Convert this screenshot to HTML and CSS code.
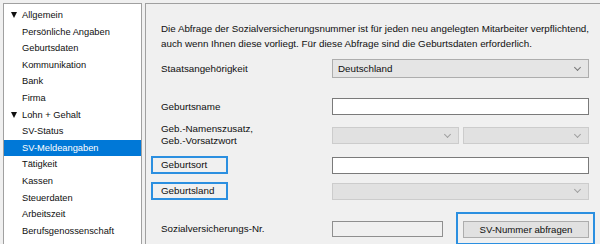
FILE: index.html
```html
<!DOCTYPE html>
<html lang="de">
<head>
    <meta charset="UTF-8">
    <title>SV-Meldeangaben</title>
    <link rel="stylesheet" href="styles.css">
</head>
<body>
    <div class="window">
        <!-- Navigation tree -->
        <ul class="tree">
            <li class="group">Allgemein</li>
            <li>Persönliche Angaben</li>
            <li>Geburtsdaten</li>
            <li>Kommunikation</li>
            <li>Bank</li>
            <li>Firma</li>
            <li class="group">Lohn + Gehalt</li>
            <li>SV-Status</li>
            <li class="selected">SV-Meldeangaben</li>
            <li>Tätigkeit</li>
            <li>Kassen</li>
            <li>Steuerdaten</li>
            <li>Arbeitszeit</li>
            <li>Berufsgenossenschaft</li>
        </ul>

        <!-- Form panel -->
        <div class="panel">
            <p class="intro">Die Abfrage der Sozialversicherungsnummer ist für jeden neu angelegten Mitarbeiter verpflichtend,<br>auch wenn Ihnen diese vorliegt. Für diese Abfrage sind die Geburtsdaten erforderlich.</p>

            <div class="form">
                <div class="row row-nation">
                    <span class="label">Staatsangehörigkeit</span>
                    <div class="select">Deutschland<span class="chev"></span></div>
                </div>

                <div class="row row-name">
                    <span class="label">Geburtsname</span>
                    <div class="input"></div>
                </div>

                <div class="row row-prefix">
                    <span class="label two-line">Geb.-Namenszusatz,<br>Geb.-Vorsatzwort</span>
                    <div class="pair">
                        <div class="select disabled"><span class="chev"></span></div>
                        <div class="select disabled"><span class="chev"></span></div>
                    </div>
                </div>

                <div class="row row-place">
                    <span class="label marked">Geburtsort</span>
                    <div class="input"></div>
                </div>

                <div class="row row-country">
                    <span class="label marked">Geburtsland</span>
                    <div class="select disabled"><span class="chev"></span></div>
                </div>

                <div class="row row-svnr">
                    <span class="label">Sozialversicherungs-Nr.</span>
                    <div class="svnr">
                        <div class="input readonly"></div>
                        <div class="button-frame">
                            <button class="button">SV-Nummer abfragen</button>
                        </div>
                    </div>
                </div>
            </div>
        </div>
    </div>
</body>
</html>
```

FILE: styles.css
```css
/* Page */
body {
    margin: 0;
    background: #f0f0f0;
    font-family: "Liberation Sans", Arial, sans-serif;
    font-size: 9.8px;
    color: #0f0f0f;
    overflow: hidden;
}

.window {
    display: flex;
    gap: 3px;
    padding: 3px 0 0 3px;
    height: 260px;
}

/* Tree on the left */
.tree {
    list-style: none;
    margin: 0;
    padding: 3px 0 0 0;
    width: 137px;
    flex-shrink: 0;
    font-size: 9.3px;
    background: #fff;
    border: 1px solid #a0a0a0;
    border-bottom: none;
}

.tree li {
    height: 16.6px;
    line-height: 16px;
    padding-left: 18px;
    white-space: nowrap;
}

.tree li.group {
    position: relative;
}

.tree li.group::before {
    content: "";
    position: absolute;
    left: 7px;
    top: 5px;
    border-left: 3px solid transparent;
    border-right: 3px solid transparent;
    border-top: 6px solid #0f0f0f;
}

.tree li.selected {
    background: #0078d7;
    color: #fff;
}

/* Right panel */
.panel {
    width: 470px;
    flex-shrink: 0;
    border: 1px solid #a0a0a0;
    border-bottom: none;
    padding: 17px 0 0 15px;
}

.intro {
    margin: 0;
    line-height: 15px;
    white-space: nowrap;
}

.form {
    margin-top: 8px;
    width: 428px;
}

.row {
    display: grid;
    grid-template-columns: 171px 257px;
    align-items: center;
}

.row-name { margin-top: 20px; }
.row-prefix { margin-top: 9px; }
.row-place { margin-top: 9px; }
.row-country { margin-top: 8px; }
.row-svnr { margin-top: 12px; }

.label {
    line-height: 14px;
    white-space: nowrap;
}

.label.two-line {
    line-height: 12px;
    align-self: start;
    margin-top: -1px;
}

.label.marked {
    margin-left: -10px;
    width: 65px;
    line-height: 14px;
    padding-left: 8px;
    border: 2px solid #2b8fe0;
}

.input {
    box-sizing: border-box;
    height: 17px;
    background: #fff;
    border: 1px solid #7a7a7a;
}

.input.readonly {
    height: 16px;
    background: #f0f0f0;
    border-color: #8f8f8f;
}

.select {
    box-sizing: border-box;
    position: relative;
    height: 17px;
    line-height: 15px;
    padding-left: 5px;
    background: #e1e1e1;
    border: 1px solid #cccccc;
}

.row-nation .select {
    height: 19px;
    line-height: 17px;
    background: #e5e5e5;
    border-color: #adadad;
}

.chev {
    position: absolute;
    right: 8px;
    top: 50%;
    margin-top: -4px;
    width: 4px;
    height: 4px;
    border-right: 1px solid #777;
    border-bottom: 1px solid #777;
    transform: rotate(45deg);
}

.select.disabled .chev {
    border-color: #a0a0a0;
}

.pair {
    display: grid;
    grid-template-columns: 1fr 1fr;
    gap: 4px;
}

.svnr {
    display: flex;
    align-items: center;
}

.svnr .input {
    flex-shrink: 0;
    width: 111px;
}

.button-frame {
    flex-shrink: 0;
    margin-left: 13px;
    padding: 7px 4px 5px 5px;
    border: 2px solid #2b8fe0;
}

.button {
    display: block;
    width: 126px;
    height: 17px;
    padding: 0;
    font-family: inherit;
    font-size: 9.6px;
    color: #0f0f0f;
    background: #e1e1e1;
    border: 1px solid #adadad;
}
```
